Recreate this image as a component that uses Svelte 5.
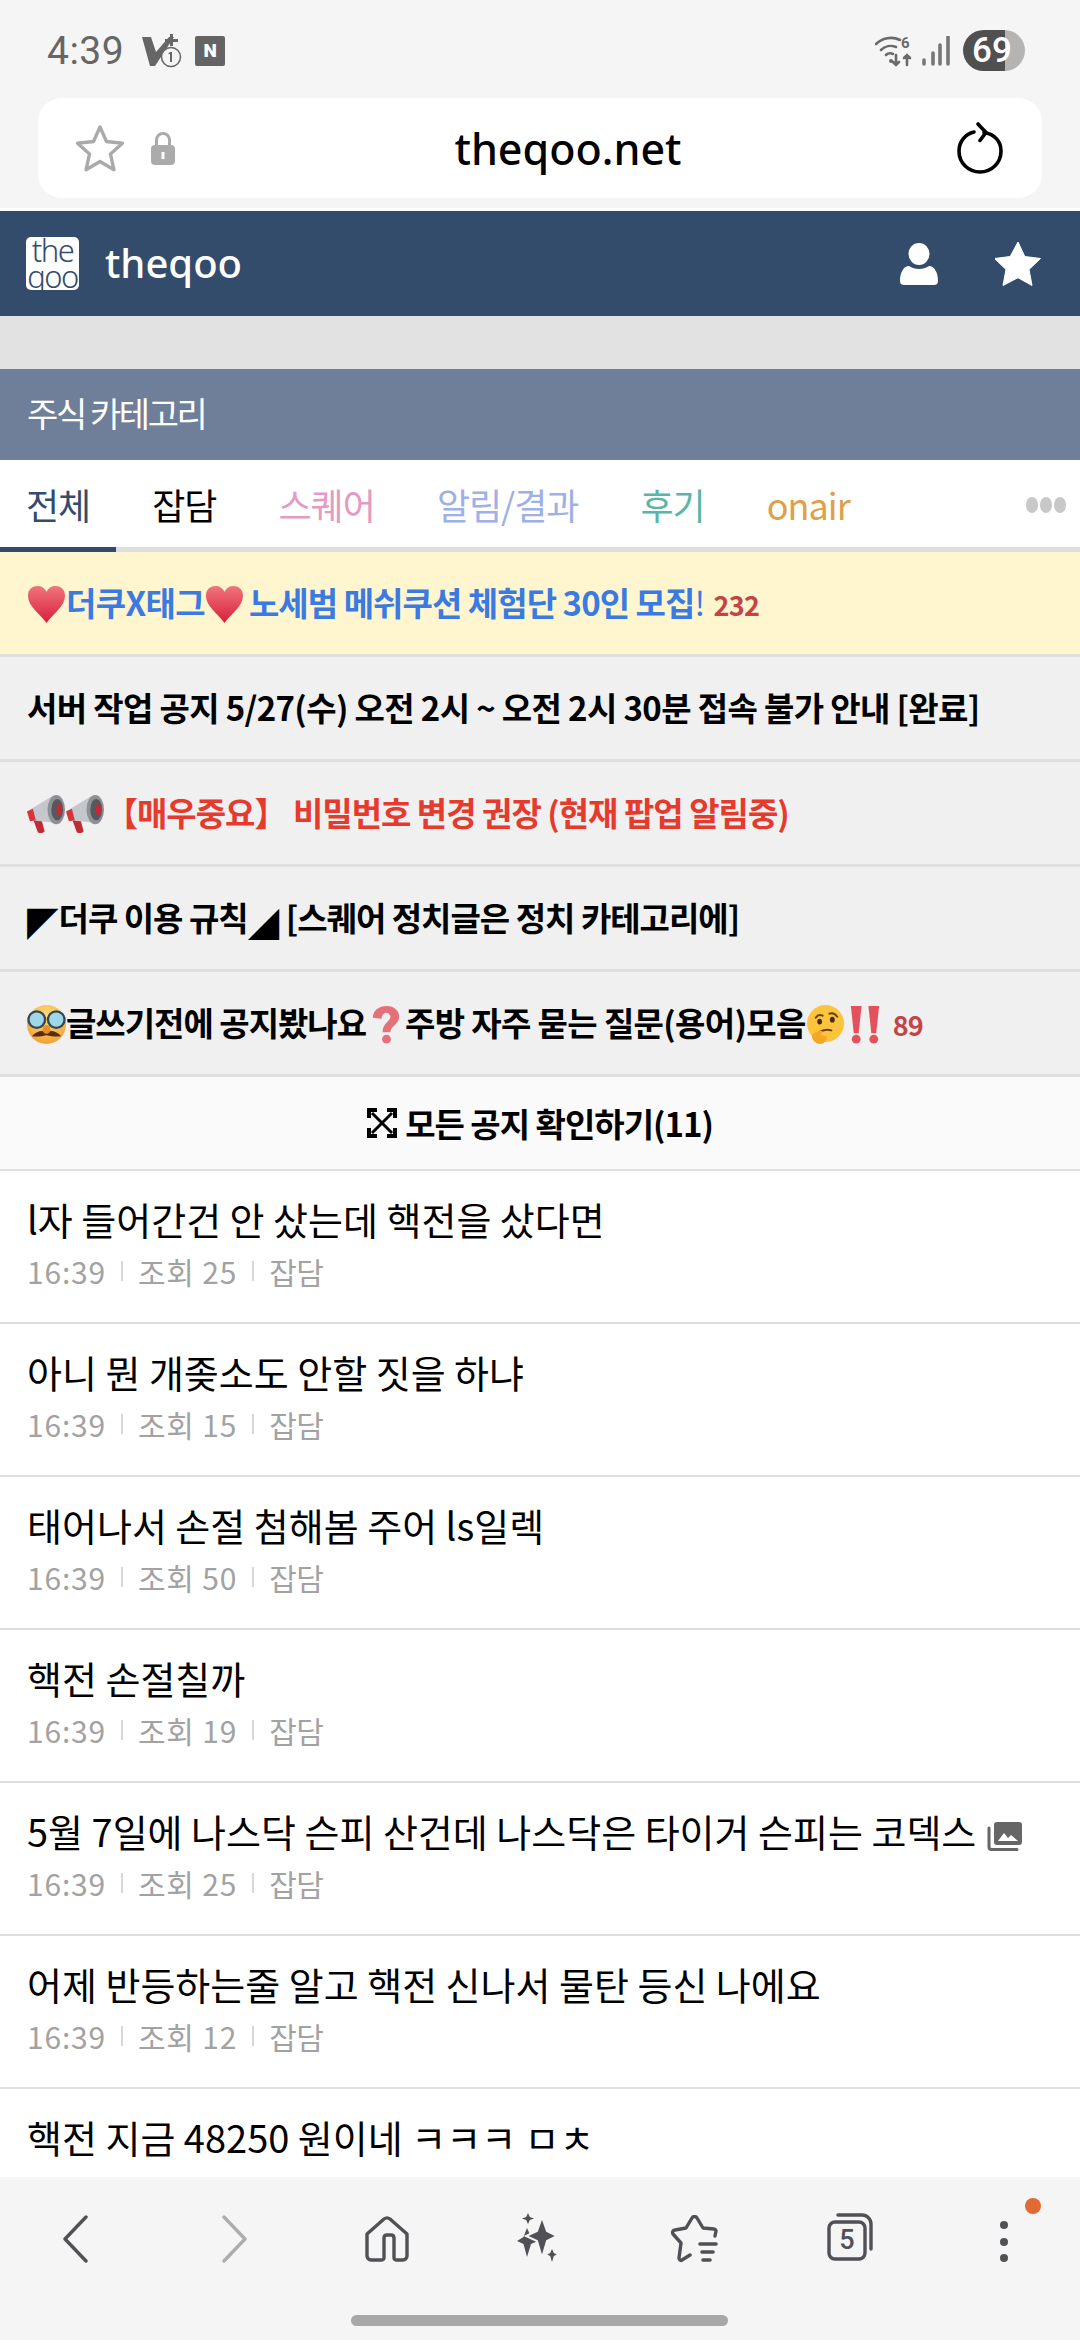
<script>
	const tabs = [
		{ name: "전체", color: "#344c6c", active: true },
		{ name: "잡담", color: "#000" },
		{ name: "스퀘어", color: "#e49ac4" },
		{ name: "알림/결과", color: "#9db0e8" },
		{ name: "후기", color: "#5bb5a6" },
		{ name: "onair", color: "#e0a04a" }
	];

	// the last row is cut by the browser toolbar, so it has no meta line to show
	const posts = [
		{ title: "l자 들어간건 안 샀는데 핵전을 샀다면", views: 25 },
		{ title: "아니 뭔 개좆소도 안할 짓을 하냐", views: 15 },
		{ title: "태어나서 손절 첨해봄 주어 ls일렉", views: 50 },
		{ title: "핵전 손절칠까", views: 19 },
		{ title: "5월 7일에 나스닥 슨피 산건데 나스닥은 타이거 슨피는 코덱스", views: 25, image: true },
		{ title: "어제 반등하는줄 알고 핵전 신나서 물탄 등신 나에요", views: 12 },
		{ title: "핵전 지금 48250 원이네 ㅋㅋㅋ ㅁㅊ" }
	];
</script>

{#snippet heart()}
	<svg class="emoji" viewBox="0 0 40 40">
		<defs>
			<linearGradient id="hg" x1="0" y1="0" x2="0" y2="1">
				<stop offset="0" stop-color="#f0757c" />
				<stop offset="1" stop-color="#d81f3c" />
			</linearGradient>
		</defs>
		<path d="M20 39C13 29 1 22 1 11 1 4 6 1 11 1c4 0 7 2 9 6 2-4 5-6 9-6 5 0 10 3 10 10 0 11-12 18-19 28z" fill="url(#hg)" />
	</svg>
{/snippet}

{#snippet horn()}
	<svg class="emoji" viewBox="0 0 40 40">
		<path d="M6 24l8-2 4 15c.3 2-6 3-7 1z" fill="#c22a35" />
		<path d="M0 17L26 1l8 28-30-3z" fill="#c4c7cc" />
		<path d="M0 17l3 10 6-1-3-12z" fill="#d9343c" />
		<ellipse cx="30" cy="15" rx="9" ry="15" fill="#8d9196" />
		<ellipse cx="31" cy="15" rx="6" ry="11" fill="#55585c" />
		<ellipse cx="33" cy="15" rx="3" ry="6" fill="#c22a35" />
	</svg>
{/snippet}

<div class="page">
	<div class="status">
		<span class="time">4:39</span>
		<svg class="st-v" viewBox="0 0 40 34">
			<path d="M0 3h9l5 15L27 3h5L13 32H8z" fill="#666" />
			<path d="M28 0h3v5h5v3h-5v4h-3V8h-5V5h5z" fill="#666" />
			<circle cx="29" cy="23" r="9.5" fill="#f5f5f5" stroke="#666" stroke-width="1.5" />
			<path d="M28 18h2v10h-2zM26 20l2-2v2z" fill="#666" />
		</svg>
		<span class="st-n">N</span>
		<span class="grow"></span>
		<svg class="st-wifi" viewBox="0 0 40 32">
			<g fill="none" stroke="#6a6a6a" stroke-width="2.6" stroke-linecap="round">
				<path d="M1 9C7 3 17 1 25 5" />
				<path d="M6 15c4-4 10-5 15-3" />
				<path d="M11 20c2-2 5-2 7-1" />
				<path d="M21 20v10M18 27l3 3 3-3M32 30V20M29 23l3-3 3 3" />
			</g>
			<circle cx="16" cy="26" r="2" fill="#6a6a6a" />
			<text x="26" y="13" class="st-six">6</text>
		</svg>
		<svg class="st-sig" viewBox="0 0 28 30">
			<path d="M2 24v4M11 17v11M18 9v19M26 1v27" stroke="#777" stroke-width="3.6" stroke-linecap="round" fill="none" />
		</svg>
		<span class="battery">69</span>
	</div>

	<div class="urlbar">
		<svg class="url-star" viewBox="0 0 50 48">
			<path d="M25 3l6.500 14.500 16 1.800-12 10.700 3.400 15.700L25 37.500l-13.900 8.200 3.400-15.700-12-10.700 16-1.800z" fill="none" stroke="#aaa" stroke-width="3.4" stroke-linejoin="round" />
		</svg>
		<svg class="url-lock" viewBox="0 0 26 34">
			<path d="M6.500 15V9a6.500 6.500 0 0 1 13 0v6" fill="none" stroke="#ababab" stroke-width="3" />
			<rect x="1" y="14" width="24" height="20" rx="4" fill="#ababab" />
			<rect x="11.500" y="21" width="3" height="7" fill="#fff" />
		</svg>
		<span class="url-text">theqoo.net</span>
		<svg class="url-reload" viewBox="0 0 46 52">
			<path d="M27 10.500C38 12 44 20 44 29c0 12-9.500 21-21 21S2 41 2 29C2 20 8 12 17 10" fill="none" stroke="#000" stroke-width="3.6" stroke-linecap="round" />
			<path d="M21 2l8 8.500-6 8" fill="none" stroke="#000" stroke-width="3.6" stroke-linecap="round" stroke-linejoin="round" />
		</svg>
	</div>
	<div class="url-gap"></div>

	<header class="head">
		<div class="logo">the<br />qoo</div>
		<span class="brand">theqoo</span>
		<span class="grow"></span>
		<svg class="head-user" viewBox="0 0 38 42">
			<ellipse cx="19" cy="11" rx="10.500" ry="11" fill="#fff" />
			<path d="M0 38c0-9 4-15 9-15 3 2 6 3 10 3s7-1 10-3c5 0 9 6 9 15 0 3-2 4-4 4H4c-2 0-4-1-4-4z" fill="#fff" />
		</svg>
		<svg class="head-star" viewBox="0 0 46 44">
			<path d="M23 0l6.800 14.500 15.700 2-11.500 11 3 16L23 35.700 8 43.500l3-16L-.5 16.500l15.700-2z" fill="#fff" stroke="#fff" stroke-linejoin="round" />
		</svg>
	</header>

	<div class="band"></div>
	<div class="category">주식 카테고리</div>

	<nav class="tabs">
		{#each tabs as tab}
			<span class="tab" class:active={tab.active} style="color: {tab.color}">{tab.name}</span>
		{/each}
		<span class="grow"></span>
		<span class="more"><i></i><i></i><i></i></span>
	</nav>

	<div class="notice yellow">{@render heart()}<b class="blue">더쿠X태그</b>{@render heart()}<b class="blue promo">노세범 메쉬쿠션 체험단 30인 모집</b><span class="bang">!</span><span class="count">232</span></div>
	<div class="notice"><b>서버 작업 공지 5/27(수) 오전 2시 ~ 오전 2시 30분 접속 불가 안내 [완료]</b></div>
	<div class="notice tight">{@render horn()}{@render horn()}<b class="red">【매우중요】 비밀번호 변경 권장 (현재 팝업 알림중)</b></div>
	<div class="notice tight"><b><span class="tri">◤</span>더쿠 이용 규칙<span class="tri">◢</span> [스퀘어 정치글은 정치 카테고리에]</b></div>
	<div class="notice tight"><svg class="emoji" viewBox="0 0 40 40">
			<defs>
				<radialGradient id="fg" cx="0.5" cy="0.3" r="0.8">
					<stop offset="0" stop-color="#ffdf7a" />
					<stop offset="1" stop-color="#ef9a2c" />
				</radialGradient>
			</defs>
			<circle cx="20" cy="20" r="20" fill="url(#fg)" />
			<circle cx="10" cy="15" r="8.500" fill="#9fd6e8" stroke="#37474f" stroke-width="2.4" />
			<circle cx="30" cy="15" r="8.500" fill="#9fd6e8" stroke="#37474f" stroke-width="2.4" />
			<path d="M5 32c4-5 11-7 15-4 4-3 11-1 15 4-6 1-10 0-15-1-5 1-9 2-15 1z" fill="#5a2d12" />
			<ellipse cx="20" cy="25" rx="4" ry="4.500" fill="#e88f2a" />
		</svg><b>글쓰기전에 공지봤나요</b><svg class="emoji" viewBox="0 0 40 40">
			<path d="M7 13C7 6 13 1 21 1s13 5 13 11c0 8-9 9-9 16h-8c0-10 8-11 8-16 0-2-2-4-4-4s-5 2-5 6z" fill="#e4707a" />
			<circle cx="21" cy="35" r="4.500" fill="#e4707a" />
		</svg><b class="faq"> 주방 자주 묻는 질문(용어)모음</b><svg class="emoji" viewBox="0 0 40 40">
			<circle cx="20" cy="19" r="19" fill="#fbc43d" />
			<path d="M10 13c2-3 5-3 7-2M24 9c3-1 6 0 8 3" stroke="#6b3f12" stroke-width="2" fill="none" stroke-linecap="round" />
			<ellipse cx="14" cy="17" rx="2.500" ry="3" fill="#4a2b10" />
			<ellipse cx="27" cy="15" rx="2.500" ry="3" fill="#4a2b10" />
			<path d="M15 27c4-2 8-2 11-1" stroke="#6b3f12" stroke-width="2" fill="none" stroke-linecap="round" />
			<path d="M6 31c3-3 6-3 8-5l3 1-2 4 6 1c1 3-2 8-6 8-5 0-9-4-9-9z" fill="#f5a623" />
		</svg><svg class="emoji" viewBox="0 0 40 40">
			<path d="M6 1h11l-3 28H9zM24 1h11l-3 28h-5z" fill="#e4505c" />
			<circle cx="11.500" cy="35" r="4.500" fill="#e4505c" />
			<circle cx="29.500" cy="35" r="4.500" fill="#e4505c" />
		</svg><span class="count">89</span></div>

	<div class="all-notices">
		<svg class="expand" viewBox="0 0 30 30">
			<path d="M2 10V2h8M20 2h8v8M28 20v8h-8M10 28H2v-8" fill="none" stroke="#000" stroke-width="4" />
			<path d="M5 5l20 20M25 5L5 25" fill="none" stroke="#000" stroke-width="3" />
		</svg>
		<b>모든 공지 확인하기(11)</b>
	</div>

	<main class="list">
		{#each posts as post}
			<article class="post">
				<div class="title">
					{post.title}
					{#if post.image}
						<svg class="img-icon" viewBox="0 0 36 30">
							<path d="M2 7v19c0 1.500 1 2.500 2.500 2.500H30" fill="none" stroke="#666" stroke-width="3" stroke-linecap="round" />
							<rect x="7" y="1" width="28" height="23" rx="3" fill="#666" />
							<path d="M11 20l6-8 4 5 3-3 7 6z" fill="#fff" />
						</svg>
					{/if}
				</div>
				{#if post.views}
					<div class="meta">
						<span class="num">16:39</span><i class="sep"></i><span class="num">조회 {post.views}</span><i class="sep"></i><span>잡담</span>
					</div>
				{/if}
			</article>
		{/each}
	</main>

	<footer class="bottom">
		<div class="icons">
			<svg class="ic-back" viewBox="0 0 26 48">
				<path d="M24 2L3 24l21 22" fill="none" stroke="#505055" stroke-width="3.4" stroke-linecap="round" stroke-linejoin="round" />
			</svg>
			<svg class="ic-fwd" viewBox="0 0 26 48">
				<path d="M2 2l21 22L2 46" fill="none" stroke="#adadad" stroke-width="3.4" stroke-linecap="round" stroke-linejoin="round" />
			</svg>
			<svg class="ic-home" viewBox="0 0 44 46">
				<path d="M2 18L19 3c2-1.500 4-1.500 6 0l17 15v22c0 2-2 4-4 4h-7c-1 0-2-1-2-2V22c0-2-1-3-3-3h-4c-2 0-3 1-3 3v20c0 1-1 2-2 2H6c-2 0-4-2-4-4z" fill="none" stroke="#505055" stroke-width="3.4" stroke-linejoin="round" />
			</svg>
			<svg class="ic-spark" viewBox="0 0 40 50">
				<path d="M11 0l1.800 4L17 5.500 12.800 7 11 11 9.200 7 5 5.500 9.200 4z" fill="#505055" />
				<path d="M10 15l4 9 7 4-7 3-4 13-3.500-13L0 28l6.500-4z" fill="#505055" />
				<path d="M25 4l5 14 10 5-10 5-5 17-5-17-11-5 11-5z" fill="#505055" stroke="#f5f5f5" stroke-width="2" />
				<path d="M35 36l1.800 4 3 1.500-3 1.500-1.800 6-1.800-6-3-1.500 3-1.500z" fill="#505055" />
			</svg>
			<svg class="ic-starlist" viewBox="0 0 48 48">
				<path d="M45 21l1-5c0-1-1-2-2-2l-11-1-6-10c-1-2-4-2-5 0l-6 10-11 2c-2 0-3 2-2 4l8 9-2 15c0 2 2 3 3 2l8-5" fill="none" stroke="#505055" stroke-width="3.4" stroke-linecap="round" stroke-linejoin="round" />
				<path d="M30 29h16M32 37h11M33 45h7" stroke="#505055" stroke-width="3.6" stroke-linecap="round" />
			</svg>
			<div class="ic-tabs">
				<svg viewBox="0 0 46 48">
					<path d="M11 2h24c5 0 9 4 9 9v25" fill="none" stroke="#505055" stroke-width="3.4" stroke-linecap="round" />
					<rect x="2" y="9" width="36" height="37" rx="6" fill="none" stroke="#505055" stroke-width="3.4" />
				</svg>
				<span>5</span>
			</div>
			<div class="ic-menu"><i></i><i></i><i></i><em></em></div>
		</div>
		<div class="home-bar"></div>
	</footer>
</div>

<style>
	:global(body) {
		margin: 0;
		background: #fff;
	}
	.page {
		width: 1080px;
		height: 2340px;
		display: flex;
		flex-direction: column;
		overflow: hidden;
		background: #f5f5f5;
		font-family: "Noto Sans CJK KR", "Noto Sans", sans-serif;
	}
	.grow {
		flex: 1;
	}

	/* status bar */
	.status {
		height: 98px;
		flex: none;
		box-sizing: border-box;
		padding: 30px 55px 27px 47px;
		display: flex;
		align-items: center;
	}
	.time {
		font: 400 39px Roboto, sans-serif;
		color: #666;
		letter-spacing: 0.5px;
	}
	.st-v {
		width: 40px;
		height: 34px;
		margin-left: 18px;
	}
	.st-n {
		width: 30px;
		height: 30px;
		margin-left: 13px;
		border-radius: 2px;
		background: #646464;
		color: #fff;
		font: 900 19px/30px Roboto, sans-serif;
		text-align: center;
	}
	.st-wifi {
		width: 40px;
		height: 32px;
	}
	.st-six {
		font: 700 15px Roboto, sans-serif;
		fill: #6a6a6a;
	}
	.st-sig {
		width: 28px;
		height: 30px;
		margin-left: 7px;
	}
	.battery {
		width: 62px;
		height: 41px;
		box-sizing: border-box;
		padding-right: 4px;
		margin-left: 13px;
		border-radius: 21px;
		background: linear-gradient(90deg, #505050 68%, #b4b4b4 68%);
		color: #fff;
		text-align: center;
		font: 500 35px/41px Roboto, sans-serif;
	}

	/* url bar */
	.urlbar {
		height: 100px;
		flex: none;
		margin: 0 38px;
		box-sizing: border-box;
		padding: 0 39px 0 37px;
		background: #fff;
		border-radius: 24px;
		display: flex;
		align-items: center;
	}
	.url-star {
		width: 50px;
		height: 48px;
	}
	.url-lock {
		width: 26px;
		height: 34px;
		margin-left: 25px;
	}
	.url-text {
		flex: 1;
		text-align: center;
		padding-left: 3px;
		font: 500 43px "Noto Sans", sans-serif;
		color: #000;
	}
	.url-reload {
		width: 46px;
		height: 52px;
	}
	.url-gap {
		height: 10px;
		flex: none;
		border-bottom: 3px solid #fff;
	}

	/* site header */
	.head {
		height: 105px;
		flex: none;
		box-sizing: border-box;
		padding: 0 39px 0 26px;
		background: #344c6c;
		display: flex;
		align-items: center;
	}
	.logo {
		width: 53px;
		height: 53px;
		background: #fff;
		border-radius: 5px;
		text-align: center;
		font: 300 31px/26px "Noto Sans", sans-serif;
		letter-spacing: -1.5px;
		color: #344c6c;
	}
	.brand {
		margin-left: 26px;
		padding-bottom: 3px;
		color: #fff;
		font: 500 40px "Noto Sans", sans-serif;
	}
	.head-user {
		width: 38px;
		height: 42px;
		margin-right: 57px;
	}
	.head-star {
		width: 46px;
		height: 44px;
	}
	.band {
		height: 53px;
		flex: none;
		background: #e2e2e2;
	}
	.category {
		height: 91px;
		flex: none;
		padding-left: 27px;
		background: #6f7f99;
		color: #fff;
		font-size: 34px;
		line-height: 88px;
		letter-spacing: -2.4px;
	}

	/* tabs */
	.tabs {
		height: 92px;
		flex: none;
		box-sizing: border-box;
		border-bottom: 5px solid #dedede;
		padding-right: 14px;
		background: #fff;
		display: flex;
		align-items: flex-start;
		gap: 10px;
	}
	.tab {
		height: 92px;
		box-sizing: border-box;
		padding: 0 26px 0 26px;
		font-size: 36px;
		line-height: 88px;
		letter-spacing: -1px;
		white-space: nowrap;
	}
	.tab.active {
		border-bottom: 5px solid #344c6c;
	}
	.more {
		height: 90px;
		display: flex;
		align-items: center;
		gap: 2px;
	}
	.more i {
		width: 12px;
		height: 16px;
		border-radius: 50%;
		background: #c8c8c8;
	}

	/* notices */
	.notice {
		height: 105px;
		flex: none;
		box-sizing: border-box;
		padding: 0 27px;
		border-bottom: 3px solid #dfdfdf;
		background: #f0f0f0;
		font-size: 33px;
		line-height: 100px;
		white-space: nowrap;
		color: #000;
		letter-spacing: -0.65px;
	}
	.notice.tight {
		letter-spacing: -1px;
	}
	.notice.yellow {
		background: #fff6d0;
	}
	.notice b {
		font-weight: 700;
	}
	.notice .faq {
		letter-spacing: -0.65px;
	}
	.emoji {
		width: 39px;
		height: 39px;
		vertical-align: -8px;
	}
	.blue {
		color: #3b7ae0;
	}
	.promo {
		margin-left: 5px;
		letter-spacing: -0.95px;
	}
	.bang {
		color: #3b7ae0;
		font-weight: 400;
	}
	.red {
		color: #e53b2f;
	}
	.count {
		font-size: 27px;
		font-weight: 700;
		color: #c24444;
		margin-left: 9px;
	}
	.tri {
		font-family: "DejaVu Sans", sans-serif;
		font-size: 41px;
		line-height: 1;
		letter-spacing: 0;
		vertical-align: -4px;
	}
	.all-notices {
		height: 94px;
		flex: none;
		box-sizing: border-box;
		border-bottom: 2px solid #dfdfdf;
		background: #fafafa;
		display: flex;
		align-items: center;
		justify-content: center;
		gap: 8px;
		font-size: 33px;
		letter-spacing: -1px;
		color: #000;
	}
	.expand {
		width: 30px;
		height: 30px;
	}

	/* posts */
	.list {
		flex: 1;
		min-height: 0;
		overflow: hidden;
		background: #fff;
	}
	.post {
		height: 153px;
		box-sizing: border-box;
		padding: 22px 27px 0;
		border-bottom: 2px solid #dedede;
	}
	.title {
		height: 52px;
		font-size: 38px;
		line-height: 52px;
		color: #000;
		white-space: nowrap;
	}
	.img-icon {
		width: 36px;
		height: 30px;
		vertical-align: -4px;
		margin-left: 2px;
	}
	.meta {
		display: flex;
		align-items: center;
		font-size: 30px;
		line-height: 52px;
		color: #a2a2a2;
		letter-spacing: -0.5px;
	}
	.num {
		letter-spacing: 0.8px;
	}
	.sep {
		width: 2px;
		height: 20px;
		margin: 0 15px;
		background: #d8d8d8;
	}

	/* browser toolbar */
	.bottom {
		position: relative;
		height: 163px;
		flex: none;
		background: #f5f5f5;
	}
	.icons {
		padding: 36px 0 0 62px;
		display: flex;
		align-items: flex-start;
	}
	.icons svg {
		display: block;
	}
	.ic-back {
		width: 26px;
		height: 48px;
		margin-top: 2px;
	}
	.ic-fwd {
		width: 26px;
		height: 48px;
		margin: 2px 0 0 134px;
	}
	.ic-home {
		width: 44px;
		height: 46px;
		margin: 3px 0 0 117px;
	}
	.ic-spark {
		width: 40px;
		height: 50px;
		margin-left: 108px;
	}
	.ic-starlist {
		width: 48px;
		height: 48px;
		margin: 2px 0 0 113px;
	}
	.ic-tabs {
		position: relative;
		width: 46px;
		height: 48px;
		margin-left: 109px;
	}
	.ic-tabs span {
		position: absolute;
		left: 2px;
		top: 9px;
		width: 36px;
		text-align: center;
		font: 500 27px/37px Roboto, sans-serif;
		color: #505055;
	}
	.ic-menu {
		position: relative;
		width: 8px;
		margin: 8px 0 0 127px;
		display: flex;
		flex-direction: column;
		gap: 8.5px;
	}
	.ic-menu i {
		width: 8px;
		height: 8px;
		border-radius: 50%;
		background: #505055;
	}
	.ic-menu em {
		position: absolute;
		left: 25px;
		top: -23px;
		width: 16px;
		height: 16px;
		border-radius: 50%;
		background: #e06a32;
	}
	.home-bar {
		position: absolute;
		left: 351px;
		top: 138px;
		width: 377px;
		height: 11px;
		border-radius: 6px;
		background: #a8a8a8;
	}
</style>
